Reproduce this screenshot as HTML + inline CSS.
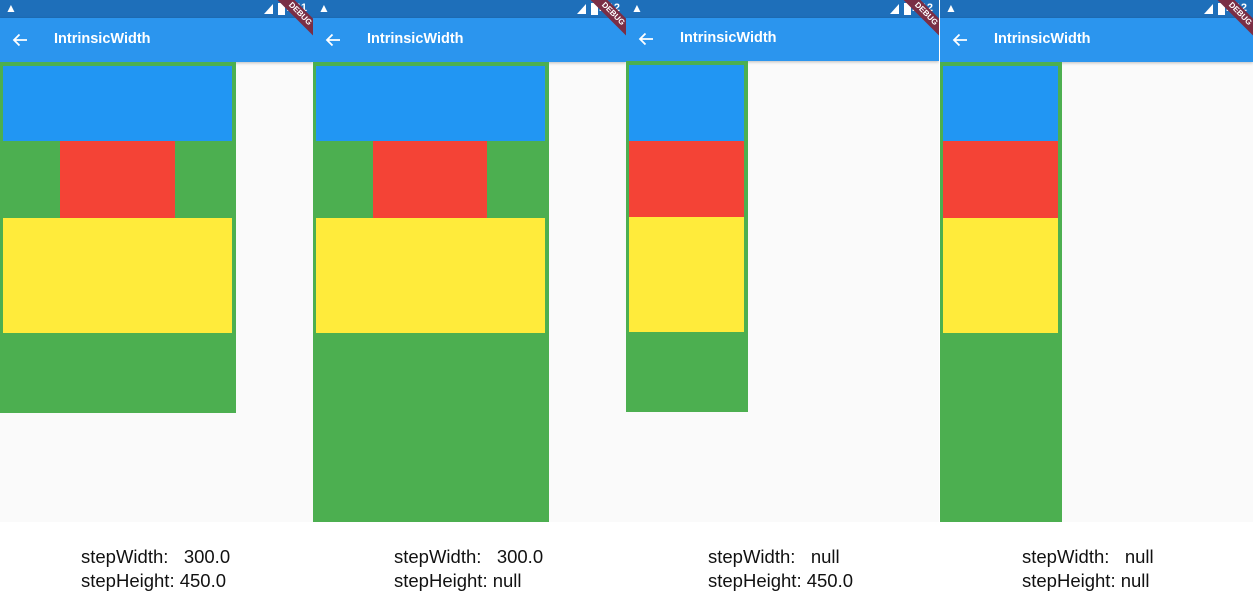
<!DOCTYPE html><html><head><style>
body{margin:0;width:1253px;height:592px;background:#fff;position:relative;overflow:hidden;font-family:"Liberation Sans",sans-serif}
.p{position:absolute;top:0;width:313px;height:522px;background:#fafafa;overflow:hidden}
.sb{position:absolute;left:0;top:0;width:100%;height:18px;background:#1e6fba}
.ab{position:absolute;left:0;top:18px;width:100%;height:44px;background:#2b95ee;box-shadow:0 1px 3px rgba(0,0,0,.25)}
.t{position:absolute;left:54px;top:13px;color:#fff;font-size:14.5px;font-weight:bold}
.ar{position:absolute;left:12px;top:15px}
.r{position:absolute}
.w{position:absolute;left:5px;top:1px;color:#fff;font-size:12px;font-weight:bold}
.ic{position:absolute;right:40px;top:4px;width:9px;height:10px;background:#fff;clip-path:polygon(100% 0,100% 100%,0 100%)}
.bt{position:absolute;right:28px;top:3px;width:7px;height:12px;background:#fff}
.tm{position:absolute;right:6px;top:2px;color:#fff;font-size:11px;font-weight:bold}
.db{position:absolute;right:-22px;top:8px;width:70px;height:12px;background:#7a2e45;color:#fff;font-size:8px;font-weight:bold;text-align:center;line-height:12px;transform:rotate(45deg)}
.tx{position:absolute;font-size:18.5px;color:#111;line-height:24px;white-space:pre}
</style></head><body>
<div class="p" style="left:0"><div class="sb"></div><div class="ab"><svg class="ar" width="16" height="14" viewBox="0 0 16 14"><path d="M15 7H2M7.5 1.5L2 7l5.5 5.5" stroke="#fff" stroke-width="1.8" fill="none"/></svg><span class="t">IntrinsicWidth</span></div><div class="w">▲</div><div class="ic"></div><div class="bt"></div><div class="tm">7:11</div><div class="db">DEBUG</div>
<div class="r" style="left:0;top:62px;width:236px;height:351px;background:#4caf50"></div>
<div class="r" style="left:3px;top:66px;width:229px;height:75px;background:#2196f3"></div>
<div class="r" style="left:60px;top:141px;width:115px;height:77px;background:#f44336"></div>
<div class="r" style="left:3px;top:218px;width:229px;height:115px;background:#ffeb3b"></div></div>
<div class="p" style="left:313px"><div class="sb"></div><div class="ab"><svg class="ar" width="16" height="14" viewBox="0 0 16 14"><path d="M15 7H2M7.5 1.5L2 7l5.5 5.5" stroke="#fff" stroke-width="1.8" fill="none"/></svg><span class="t">IntrinsicWidth</span></div><div class="w">▲</div><div class="ic"></div><div class="bt"></div><div class="tm">7:12</div><div class="db">DEBUG</div>
<div class="r" style="left:0;top:62px;width:236px;height:460px;background:#4caf50"></div>
<div class="r" style="left:3px;top:66px;width:229px;height:75px;background:#2196f3"></div>
<div class="r" style="left:60px;top:141px;width:114px;height:77px;background:#f44336"></div>
<div class="r" style="left:3px;top:218px;width:229px;height:115px;background:#ffeb3b"></div></div>
<div class="p" style="left:626px"><div class="sb"></div><div class="ab" style="height:43px"><svg class="ar" style="top:14px" width="16" height="14" viewBox="0 0 16 14"><path d="M15 7H2M7.5 1.5L2 7l5.5 5.5" stroke="#fff" stroke-width="1.8" fill="none"/></svg><span class="t" style="top:12px">IntrinsicWidth</span></div><div class="w">▲</div><div class="ic"></div><div class="bt"></div><div class="tm">7:12</div><div class="db">DEBUG</div>
<div class="r" style="left:0;top:61px;width:122px;height:351px;background:#4caf50"></div>
<div class="r" style="left:3px;top:65px;width:115px;height:76px;background:#2196f3"></div>
<div class="r" style="left:3px;top:141px;width:115px;height:76px;background:#f44336"></div>
<div class="r" style="left:3px;top:217px;width:115px;height:115px;background:#ffeb3b"></div></div>
<div class="p" style="left:940px"><div class="sb"></div><div class="ab"><svg class="ar" width="16" height="14" viewBox="0 0 16 14"><path d="M15 7H2M7.5 1.5L2 7l5.5 5.5" stroke="#fff" stroke-width="1.8" fill="none"/></svg><span class="t">IntrinsicWidth</span></div><div class="w">▲</div><div class="ic"></div><div class="bt"></div><div class="tm">7:12</div><div class="db">DEBUG</div>
<div class="r" style="left:0;top:62px;width:122px;height:460px;background:#4caf50"></div>
<div class="r" style="left:3px;top:66px;width:115px;height:75px;background:#2196f3"></div>
<div class="r" style="left:3px;top:141px;width:115px;height:77px;background:#f44336"></div>
<div class="r" style="left:3px;top:218px;width:115px;height:115px;background:#ffeb3b"></div></div>
<div class="tx" style="left:81px;top:545px">stepWidth:   300.0
stepHeight: 450.0</div>
<div class="tx" style="left:394px;top:545px">stepWidth:   300.0
stepHeight: null</div>
<div class="tx" style="left:708px;top:545px">stepWidth:   null
stepHeight: 450.0</div>
<div class="tx" style="left:1022px;top:545px">stepWidth:   null
stepHeight: null</div>
</body></html>
